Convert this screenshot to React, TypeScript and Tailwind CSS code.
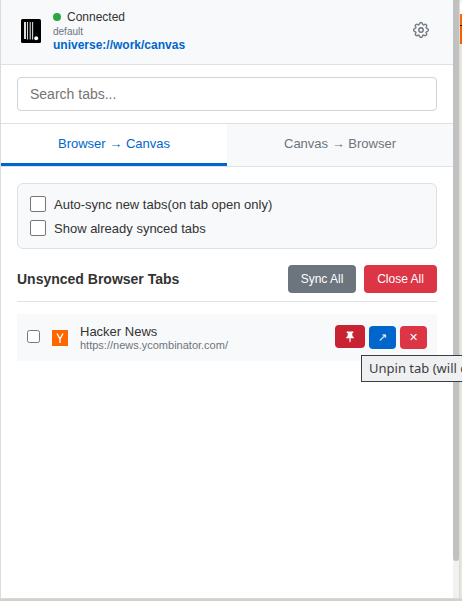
import type { ReactNode } from "react";

function Check({ big = false }: { big?: boolean }) {
  return (
    <input
      type="checkbox"
      className={
        big
          ? "m-0 h-4 w-4 shrink-0 appearance-none rounded-[2px] border border-[#767676] bg-white"
          : "m-0 h-[13px] w-[13px] shrink-0 appearance-none rounded-[2.5px] border border-[#767676] bg-white"
      }
    />
  );
}

function Logo() {
  return (
    <svg className="block h-6 w-5 shrink-0" viewBox="0 0 20 24">
      <rect width="20" height="24" rx="1.5" fill="#000" />
      <rect x="3" y="3" width="2" height="17" fill="#ddd" />
      <path d="M6.5 3V20.5M9.2 3V20.5M11.6 3V20.5" stroke="#d4d4d4" strokeWidth="1.1" />
      <circle cx="15.2" cy="19.3" r="2" fill="#fff" />
    </svg>
  );
}

function Gear() {
  return (
    <svg className="block h-4 w-4" viewBox="0 0 16 16" fill="#6c757d">
      <circle cx="8" cy="8" r="2.2" fill="none" stroke="#6c757d" strokeWidth="1.4" />
      <path
        stroke="#6c757d"
        strokeWidth="0.35"
        d="M9.796 1.343c-.527-1.79-3.065-1.79-3.592 0l-.094.319a.873.873 0 0 1-1.255.52l-.292-.16c-1.64-.892-3.433.902-2.54 2.541l.159.292a.873.873 0 0 1-.52 1.255l-.319.094c-1.79.527-1.79 3.065 0 3.592l.319.094a.873.873 0 0 1 .52 1.255l-.16.292c-.892 1.64.901 3.434 2.541 2.54l.292-.159a.873.873 0 0 1 1.255.52l.094.319c.527 1.79 3.065 1.79 3.592 0l.094-.319a.873.873 0 0 1 1.255-.52l.292.16c1.64.893 3.434-.902 2.54-2.541l-.159-.292a.873.873 0 0 1 .52-1.255l.319-.094c1.79-.527 1.79-3.065 0-3.592l-.319-.094a.873.873 0 0 1-.52-1.255l.16-.292c.893-1.64-.902-3.433-2.541-2.54l-.292.159a.873.873 0 0 1-1.255-.52zm-2.633.283c.246-.835 1.428-.835 1.674 0l.094.319a1.873 1.873 0 0 0 2.693 1.115l.291-.16c.764-.415 1.6.42 1.184 1.185l-.159.292a1.873 1.873 0 0 0 1.116 2.692l.318.094c.835.246.835 1.428 0 1.674l-.319.094a1.873 1.873 0 0 0-1.115 2.693l.16.291c.415.764-.42 1.6-1.185 1.184l-.291-.159a1.873 1.873 0 0 0-2.693 1.116l-.094.318c-.246.835-1.428.835-1.674 0l-.094-.319a1.873 1.873 0 0 0-2.692-1.115l-.292.16c-.764.415-1.6-.42-1.184-1.185l.159-.291A1.873 1.873 0 0 0 1.945 8.93l-.319-.094c-.835-.246-.835-1.428 0-1.674l.319-.094A1.873 1.873 0 0 0 3.06 4.377l-.16-.292c-.415-.764.42-1.6 1.185-1.184l.292.159a1.873 1.873 0 0 0 2.692-1.115z"
      />
    </svg>
  );
}

function Option({ children }: { children: ReactNode }) {
  return (
    <label className="flex h-4 items-center gap-2 text-[13px] leading-4 whitespace-nowrap">
      <Check big />
      <span className="pt-[2px]">{children}</span>
    </label>
  );
}

export default function App() {
  return (
    <div className="relative flex h-[601px] w-[462px] overflow-hidden bg-[#e0e1dc] font-['Liberation_Sans',Arial,sans-serif] text-[#333]">
      <div className="flex h-[598px] w-[459px] shrink-0 border-l border-[#dcdcdc] bg-white">
        <main className="w-[452px] shrink-0">
          <header className="flex h-[65px] items-center border-b border-[#dee2e6] bg-[#f8f9fa] pr-6 pl-5">
            <div className="-mt-[2px] mr-3">
              <Logo />
            </div>
            <div className="-mt-[3px] flex-1">
              <div className="flex h-4 items-center gap-1.5 text-[12px] leading-4">
                <span className="h-2 w-2 rounded-full bg-[#28a745]" />
                <span>Connected</span>
              </div>
              <div className="h-3 text-[10px] leading-[13px] text-[#6c757d]">default</div>
              <div className="h-4 text-[12px] leading-4 font-bold text-[#0066cc]">universe://work/canvas</div>
            </div>
            <button className="-mt-1 block">
              <Gear />
            </button>
          </header>

          <div className="h-[59px] border-b border-[#dee2e6] px-4 pt-3">
            <input
              placeholder="Search tabs..."
              className="block h-[34px] w-full rounded-[4px] border border-[#ced4da] bg-white px-3 text-[14px] outline-none placeholder:text-[#757575]"
            />
          </div>

          <nav className="flex h-[43px] border-b border-[#dee2e6] text-[13px]">
            <button className="h-[42px] w-1/2 border-b-[3px] border-[#0066cc] bg-white text-[#0066cc]">Browser → Canvas</button>
            <button className="h-[42px] w-1/2 border-b-[3px] border-transparent bg-[#f8f9fa] text-[#6c757d]">Canvas → Browser</button>
          </nav>

          <section className="px-4 pt-4">
            <div className="flex h-[66px] flex-col gap-2 rounded-[6px] border border-[#dee2e6] bg-[#f8f9fa] px-3 pt-3">
              <Option>Auto-sync new tabs(on tab open only)</Option>
              <Option>Show already synced tabs</Option>
            </div>

            <div className="mt-4 flex h-[37px] items-start justify-between border-b border-[#dee2e6]">
              <h3 className="text-[14px] leading-7 font-bold">Unsynced Browser Tabs</h3>
              <div className="flex gap-2 text-[12px] text-white">
                <button className="h-7 w-[68px] rounded-[4px] bg-[#6c757d]">Sync All</button>
                <button className="h-7 w-[73px] rounded-[4px] bg-[#dc3545]">Close All</button>
              </div>
            </div>

            <div className="mt-3 flex h-[47px] items-center bg-[#f8f9fa] px-[10px]">
              <div className="-mt-[2px] flex">
                <Check />
              </div>
              <svg className="mt-px ml-3 block h-4 w-4 shrink-0" viewBox="0 0 16 16">
                <rect width="16" height="16" fill="#ff6600" />
                <path d="M5 3.5 8 9l3-5.5M8 8.6V13" fill="none" stroke="#fff" strokeWidth="1.35" />
              </svg>
              <div className="ml-3 flex-1">
                <div className="text-[13px] leading-[15px]">Hacker News</div>
                <div className="text-[11px] leading-3 text-[#6c757d]">https://news.ycombinator.com/</div>
              </div>
              <div className="flex gap-1 text-white">
                <button className="-mt-px mb-px flex h-[23px] w-[30px] items-center justify-center rounded-[4px] bg-[#c82333]">
                  <svg className="block h-3 w-3" viewBox="0 0 12 12">
                    <path d="M2.7 0.6h6.6v1.4H8.2l.3 3.2c1 .5 1.5 1.1 1.5 2.1H6.6v3.2L6 11.6l-.6-1.1V7.3H2c0-1 .5-1.6 1.5-2.1L3.8 2H2.7z" fill="#fff" />
                  </svg>
                </button>
                <button className="h-[23px] w-[27px] rounded-[4px] bg-[#0066cc] text-[11px] leading-[23px]">↗</button>
                <button className="h-[23px] w-[27px] rounded-[4px] bg-[#dc3545] text-[11px] leading-[23px]">✕</button>
              </div>
            </div>
          </section>
        </main>
        <div className="w-[6px] shrink-0 bg-[#f1f1f1]">
          <div className="h-[561px] rounded-b-[3px] bg-[#c1c1c1]" />
        </div>
      </div>

      <div className="flex h-[598px] w-[3px] shrink-0 flex-col border-l border-[#d9dad6] bg-[#e6e6df]">
        <div className="h-[14px] border-t-[3px] border-[#f4f4f4] bg-white" />
        <div className="h-[11px] bg-[#ff6600]" />
        <div className="h-px bg-black" />
        <div className="h-[18px] bg-[#f26100]" />
      </div>
      <div className="absolute bottom-0 left-0 h-[3px] w-full border-t border-[#d8d9d5] bg-[#d0d2cb]" />

      <div className="absolute top-[355px] left-[361px] flex h-[27px] w-[150px] items-center border border-[#3b3e41] bg-[#eff0f1] pl-[7px] font-['Noto_Sans',sans-serif] text-[13px] whitespace-nowrap text-[#3b3e41]">
        Unpin tab (will close)
      </div>
    </div>
  );
}
